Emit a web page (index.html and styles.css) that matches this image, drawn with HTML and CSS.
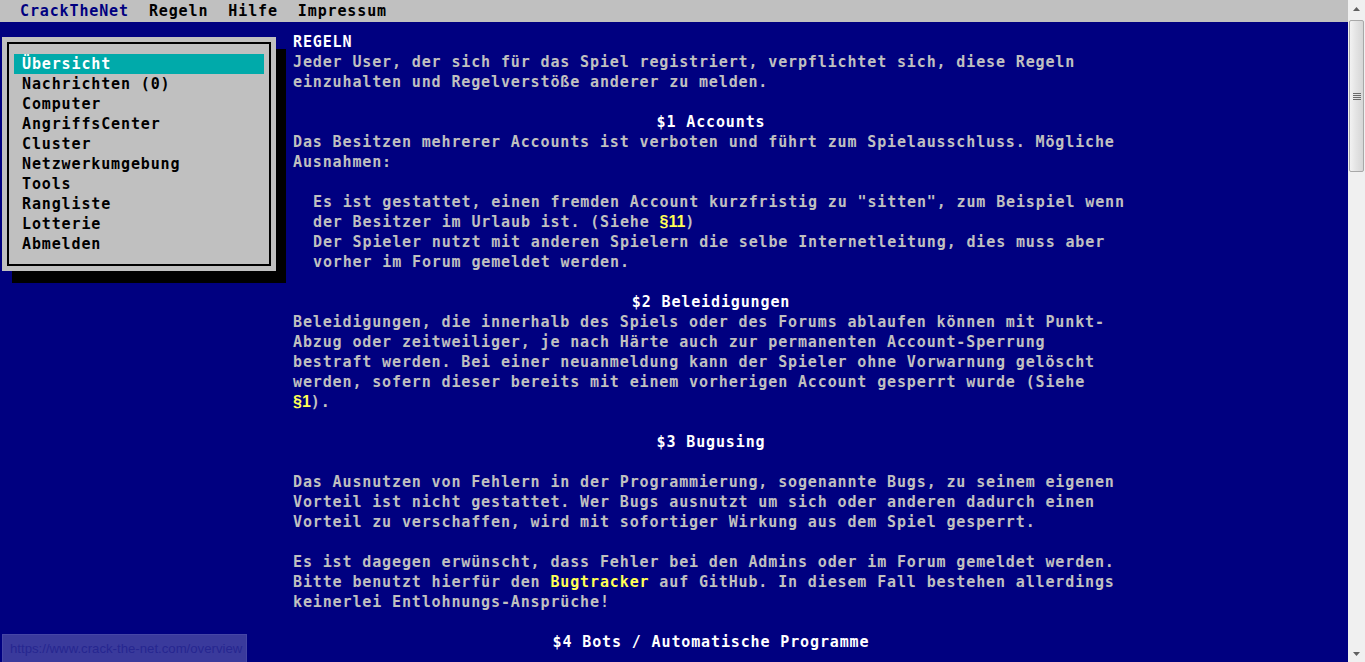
FILE: index.html
```html
<!DOCTYPE html>
<html lang="de">
<head>
<meta charset="utf-8">
<title>CrackTheNet - Regeln</title>
<link rel="stylesheet" href="styles.css">
</head>
<body>
<div class="viewport">
  <nav class="topbar">
    <a class="top-item brand" href="#">CrackTheNet</a>
    <a class="top-item" href="#">Regeln</a>
    <a class="top-item" href="#">Hilfe</a>
    <a class="top-item" href="#">Impressum</a>
  </nav>
  <div class="main">
    <aside class="sidebar">
      <div class="menu-box">
        <ul class="menu">
          <li class="menu-item active">Übersicht</li>
          <li class="menu-item">Nachrichten (0)</li>
          <li class="menu-item">Computer</li>
          <li class="menu-item">AngriffsCenter</li>
          <li class="menu-item">Cluster</li>
          <li class="menu-item">Netzwerkumgebung</li>
          <li class="menu-item">Tools</li>
          <li class="menu-item">Rangliste</li>
          <li class="menu-item">Lotterie</li>
          <li class="menu-item">Abmelden</li>
        </ul>
      </div>
    </aside>
    <article class="content">
      <h1 class="title">REGELN</h1>
      <p class="para">Jeder User, der sich für das Spiel registriert, verpflichtet sich, diese Regeln einzuhalten und Regelverstöße anderer zu melden.</p>

      <h2 class="section">$1 Accounts</h2>
      <p class="para">Das Besitzen mehrerer Accounts ist verboten und führt zum Spielausschluss. Mögliche Ausnahmen:</p>
      <ul class="list">
        <li>Es ist gestattet, einen fremden Account kurzfristig zu "sitten", zum Beispiel wenn der Besitzer im Urlaub ist. (Siehe <a class="ref" href="#">§11</a>)</li>
        <li>Der Spieler nutzt mit anderen Spielern die selbe Internetleitung, dies muss aber vorher im Forum gemeldet werden.</li>
      </ul>

      <h2 class="section">$2 Beleidigungen</h2>
      <p class="para">Beleidigungen, die innerhalb des Spiels oder des Forums ablaufen können mit Punkt-Abzug oder zeitweiliger, je nach Härte auch zur permanenten Account-Sperrung bestraft werden. Bei einer neuanmeldung kann der Spieler ohne Vorwarnung gelöscht werden, sofern dieser bereits mit einem vorherigen Account gesperrt wurde (Siehe <a class="ref" href="#">§1</a>).</p>

      <h2 class="section spaced">$3 Bugusing</h2>
      <p class="para">Das Ausnutzen von Fehlern in der Programmierung, sogenannte Bugs, zu seinem eigenen Vorteil ist nicht gestattet. Wer Bugs ausnutzt um sich oder anderen dadurch einen Vorteil zu verschaffen, wird mit sofortiger Wirkung aus dem Spiel gesperrt.</p>
      <p class="para">Es ist dagegen erwünscht, dass Fehler bei den Admins oder im Forum gemeldet werden. Bitte benutzt hierfür den <a class="link" href="#">Bugtracker</a> auf GitHub. In diesem Fall bestehen allerdings keinerlei Entlohnungs-Ansprüche!</p>

      <h2 class="section">$4 Bots / Automatische Programme</h2>
    </article>
  </div>
</div>
<div class="scrollbar" aria-hidden="true">
  <div class="sb-btn">
    <svg width="17" height="17" viewBox="0 0 17 17"><path d="M5 11 L8.5 7 L12 11 Z" fill="#606060"/></svg>
  </div>
  <div class="sb-track">
    <div class="sb-thumb"><span class="sb-grip"></span></div>
  </div>
  <div class="sb-btn">
    <svg width="17" height="17" viewBox="0 0 17 17"><path d="M5 7 L8.5 11 L12 7 Z" fill="#606060"/></svg>
  </div>
</div>
<div class="status">https://www.crack-the-net.com/overview</div>
</body>
</html>
```

FILE: styles.css
```css
html {
  background: #000080;
}

body {
  margin: 0;
  height: 100vh;
  overflow: hidden;
  display: flex;
  background: #000080;
  color: #c0c0c0;
  font-family: "DejaVu Sans Mono", "Liberation Mono", monospace;
  font-weight: bold;
  font-size: 15px;
  letter-spacing: 0.87px;
  line-height: 20px;
}

.viewport {
  flex: 1 1 auto;
  min-width: 0;
  overflow: hidden;
}

.topbar {
  display: flex;
  height: 22px;
  line-height: 22px;
  background: #c0c0c0;
  padding-left: 10px;
}

.top-item {
  padding: 0 10px;
  color: #000;
  text-decoration: none;
}

.top-item.brand {
  color: #000080;
}

.main {
  display: flex;
  align-items: flex-start;
}

.sidebar {
  flex: 0 0 293px;
  box-sizing: border-box;
  padding: 15px 0 0 2px;
}

.menu-box {
  width: 274px;
  box-sizing: border-box;
  padding: 5px;
  background: #c0c0c0;
  box-shadow: 10px 12px 0 #000;
}

.menu {
  list-style: none;
  margin: 0;
  padding: 10px 5px;
  border: 2px solid #000;
}

.menu-item {
  height: 20px;
  padding-left: 8px;
  color: #000;
}

.menu-item.active {
  background: #00aaaa;
  color: #fff;
}

.content {
  width: 836px;
  margin-top: 10px;
}

.title {
  margin: 0;
  font-size: inherit;
  color: #fff;
}

.section {
  margin: 0;
  font-size: inherit;
  text-align: center;
  color: #fff;
}

.section.spaced {
  margin-bottom: 20px;
}

.para {
  margin: 0 0 20px;
}

.list {
  list-style: none;
  margin: 0 0 20px;
  padding-left: 20px;
}

.ref {
  font-family: "Liberation Sans", Arial, sans-serif;
  font-size: 16px;
  line-height: 16px;
  letter-spacing: 0;
  color: #ffff55;
  text-decoration: none;
}

.link {
  color: #ffff55;
  text-decoration: none;
}

/* fake browser scrollbar */
.scrollbar {
  flex: 0 0 17px;
  display: flex;
  flex-direction: column;
  background: #f0f0f0;
}

.sb-btn {
  height: 17px;
  flex: 0 0 17px;
}

.sb-btn svg {
  display: block;
}

.sb-track {
  flex: 1 1 auto;
  padding: 3px 1px 0 1px;
}

.sb-thumb {
  height: 152px;
  box-sizing: border-box;
  display: flex;
  align-items: center;
  justify-content: center;
  background: linear-gradient(to right, #f2f2f2, #e4e4e4 45%, #d6d6d6);
  border: 1px solid #a8a8a8;
  border-radius: 2px;
}

.sb-grip {
  width: 8px;
  height: 7px;
  background: repeating-linear-gradient(to bottom, #6a6a6a 0 1px, transparent 1px 2px);
}

/* link hover status bubble */
.status {
  position: fixed;
  left: 2px;
  bottom: 0;
  width: 245px;
  height: 28px;
  box-sizing: border-box;
  padding-left: 7px;
  background: #3a3a9c;
  border: 1px solid #4646a6;
  border-bottom: 0;
  color: #262690;
  font-family: "Liberation Sans", Arial, sans-serif;
  font-weight: normal;
  font-size: 13.2px;
  letter-spacing: 0;
  line-height: 28px;
  white-space: nowrap;
  overflow: hidden;
}
```
